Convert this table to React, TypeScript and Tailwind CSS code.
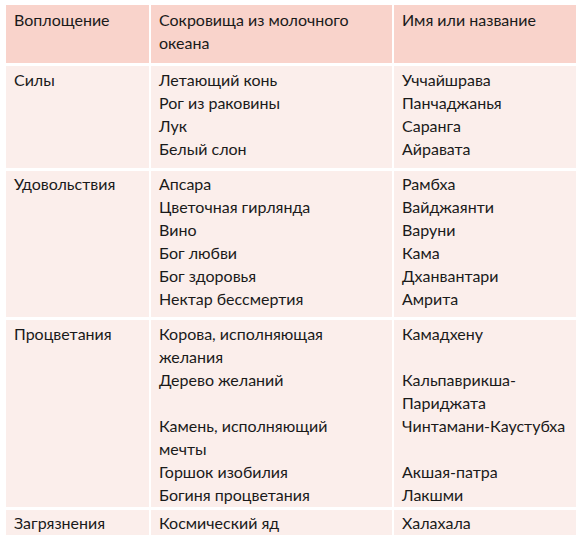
import React from 'react';

type Row = { kind: string; treasures: string[]; names: string[]; pad: string };

const rows: Row[] = [
  {
    kind: 'Силы',
    treasures: ['Летающий конь', 'Рог из раковины', 'Лук', 'Белый слон'],
    names: ['Уччайшрава', 'Панчаджанья', 'Саранга', 'Айравата'],
    pad: 'pt-[2px]',
  },
  {
    kind: 'Удовольствия',
    treasures: ['Апсара', 'Цветочная гирлянда', 'Вино', 'Бог любви', 'Бог здоровья', 'Нектар бессмертия'],
    names: ['Рамбха', 'Вайджаянти', 'Варуни', 'Кама', 'Дханвантари', 'Амрита'],
    pad: 'pt-[1px]',
  },
  {
    kind: 'Процветания',
    treasures: [
      'Корова, исполняющая',
      'желания',
      'Дерево желаний',
      '',
      'Камень, исполняющий',
      'мечты',
      'Горшок изобилия',
      'Богиня процветания',
    ],
    names: ['Камадхену', '', 'Кальпаврикша-', 'Париджата', 'Чинтамани-Каустубха', '', 'Акшая-патра', 'Лакшми'],
    pad: 'pt-[2px]',
  },
  {
    kind: 'Загрязнения',
    treasures: ['Космический яд'],
    names: ['Халахала'],
    pad: 'pt-[1px]',
  },
];

function Lines({ items }: { items: string[] }) {
  return (
    <>
      {items.map((t, i) => (
        <div key={i} className="h-[23px] whitespace-nowrap">
          {t}
        </div>
      ))}
    </>
  );
}

export default function App() {
  const cell = 'bg-[#fbeeeb] pl-[8px] overflow-hidden';
  const head = 'bg-[#f9d3cb] pl-[8px] pt-[3px]';
  return (
    <div
      className="w-[584px] h-[544px] bg-white pt-[5px] pl-[6px] text-[16px] leading-[23px] text-[#1a1a1a]"
      style={{ fontFamily: 'Lato, "Noto Sans", sans-serif' }}
    >
      <div className="grid grid-cols-[143px_241px_182px] grid-rows-[58px_102px_146px_187px_25px] gap-x-[2px] gap-y-[3px]">
        <div className={head}>Воплощение</div>
        <div className={head}>
          <div>Сокровища из молочного</div>
          <div>океана</div>
        </div>
        <div className={head}>Имя или название</div>
        {rows.map((r) => (
          <React.Fragment key={r.kind}>
            <div className={`${cell} ${r.pad}`}>{r.kind}</div>
            <div className={`${cell} ${r.pad}`}>
              <Lines items={r.treasures} />
            </div>
            <div className={`${cell} ${r.pad}`}>
              <Lines items={r.names} />
            </div>
          </React.Fragment>
        ))}
      </div>
    </div>
  );
}
